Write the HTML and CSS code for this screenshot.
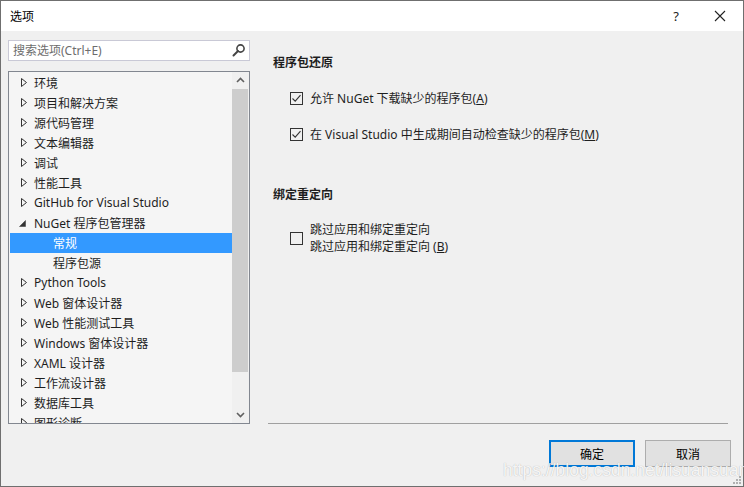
FILE: index.html
```html
<!DOCTYPE html>
<html lang="zh">
<head>
<meta charset="utf-8">
<link rel="stylesheet" href="styles.css">
</head>
<body>
<div class="window">
  <div class="titlebar">
    <span class="title">选项</span>
    <span class="tb-btn help">?</span>
    <span class="tb-btn close"><svg width="12" height="12" viewBox="0 0 12 12"><path d="M1 1L11 11M11 1L1 11" stroke="#222" stroke-width="1.1" fill="none"/></svg></span>
  </div>
  <div class="main">
    <div class="left">
      <div class="search">
        <span class="placeholder">搜索选项(Ctrl+E)</span>
        <svg class="search-icon" width="14" height="14" viewBox="0 0 14 14"><circle cx="8.5" cy="5.5" r="3.6" stroke="#444" stroke-width="1.6" fill="none"/><path d="M6 8L1.5 12.5" stroke="#444" stroke-width="2" stroke-linecap="round"/></svg>
      </div>
      <div class="tree">
        <div class="rows">
          <div class="row"><span class="arrow"><svg width="6" height="9" viewBox="0 0 6 9"><path d="M0.5 0.5L5.5 4.5L0.5 8.5Z" fill="none" stroke="#333"/></svg></span>环境</div>
          <div class="row"><span class="arrow"><svg width="6" height="9" viewBox="0 0 6 9"><path d="M0.5 0.5L5.5 4.5L0.5 8.5Z" fill="none" stroke="#333"/></svg></span>项目和解决方案</div>
          <div class="row"><span class="arrow"><svg width="6" height="9" viewBox="0 0 6 9"><path d="M0.5 0.5L5.5 4.5L0.5 8.5Z" fill="none" stroke="#333"/></svg></span>源代码管理</div>
          <div class="row"><span class="arrow"><svg width="6" height="9" viewBox="0 0 6 9"><path d="M0.5 0.5L5.5 4.5L0.5 8.5Z" fill="none" stroke="#333"/></svg></span>文本编辑器</div>
          <div class="row"><span class="arrow"><svg width="6" height="9" viewBox="0 0 6 9"><path d="M0.5 0.5L5.5 4.5L0.5 8.5Z" fill="none" stroke="#333"/></svg></span>调试</div>
          <div class="row"><span class="arrow"><svg width="6" height="9" viewBox="0 0 6 9"><path d="M0.5 0.5L5.5 4.5L0.5 8.5Z" fill="none" stroke="#333"/></svg></span>性能工具</div>
          <div class="row"><span class="arrow"><svg width="6" height="9" viewBox="0 0 6 9"><path d="M0.5 0.5L5.5 4.5L0.5 8.5Z" fill="none" stroke="#333"/></svg></span>GitHub for Visual Studio</div>
          <div class="row"><span class="arrow exp"><svg width="7" height="7" viewBox="0 0 7 7"><path d="M6.5 0.5L6.5 6.5L0.5 6.5Z" fill="#333" stroke="#333" stroke-width="0.5"/></svg></span>NuGet 程序包管理器</div>
          <div class="row child selected">常规</div>
          <div class="row child">程序包源</div>
          <div class="row"><span class="arrow"><svg width="6" height="9" viewBox="0 0 6 9"><path d="M0.5 0.5L5.5 4.5L0.5 8.5Z" fill="none" stroke="#333"/></svg></span>Python Tools</div>
          <div class="row"><span class="arrow"><svg width="6" height="9" viewBox="0 0 6 9"><path d="M0.5 0.5L5.5 4.5L0.5 8.5Z" fill="none" stroke="#333"/></svg></span>Web 窗体设计器</div>
          <div class="row"><span class="arrow"><svg width="6" height="9" viewBox="0 0 6 9"><path d="M0.5 0.5L5.5 4.5L0.5 8.5Z" fill="none" stroke="#333"/></svg></span>Web 性能测试工具</div>
          <div class="row"><span class="arrow"><svg width="6" height="9" viewBox="0 0 6 9"><path d="M0.5 0.5L5.5 4.5L0.5 8.5Z" fill="none" stroke="#333"/></svg></span>Windows 窗体设计器</div>
          <div class="row"><span class="arrow"><svg width="6" height="9" viewBox="0 0 6 9"><path d="M0.5 0.5L5.5 4.5L0.5 8.5Z" fill="none" stroke="#333"/></svg></span>XAML 设计器</div>
          <div class="row"><span class="arrow"><svg width="6" height="9" viewBox="0 0 6 9"><path d="M0.5 0.5L5.5 4.5L0.5 8.5Z" fill="none" stroke="#333"/></svg></span>工作流设计器</div>
          <div class="row"><span class="arrow"><svg width="6" height="9" viewBox="0 0 6 9"><path d="M0.5 0.5L5.5 4.5L0.5 8.5Z" fill="none" stroke="#333"/></svg></span>数据库工具</div>
          <div class="row"><span class="arrow"><svg width="6" height="9" viewBox="0 0 6 9"><path d="M0.5 0.5L5.5 4.5L0.5 8.5Z" fill="none" stroke="#333"/></svg></span>图形诊断</div>
        </div>
        <div class="scrollbar">
          <div class="sb-btn"><svg width="9" height="6" viewBox="0 0 9 6"><path d="M1 5L4.5 1.5L8 5" stroke="#606060" stroke-width="1.6" fill="none"/></svg></div>
          <div class="sb-thumb"></div>
          <div class="sb-track"></div>
          <div class="sb-btn"><svg width="9" height="6" viewBox="0 0 9 6"><path d="M1 1L4.5 4.5L8 1" stroke="#606060" stroke-width="1.6" fill="none"/></svg></div>
        </div>
      </div>
    </div>
    <div class="right">
      <div class="content">
        <div class="heading">程序包还原</div>
        <div class="check first">
          <span class="box"><svg width="11" height="11" viewBox="0 0 11 11"><path d="M1.5 5.5L4.2 8.2L9.5 2.2" stroke="#333" stroke-width="1.1" fill="none"/></svg></span>
          <span class="label">允许 NuGet 下载缺少的程序包(<u>A</u>)</span>
        </div>
        <div class="check second">
          <span class="box"><svg width="11" height="11" viewBox="0 0 11 11"><path d="M1.5 5.5L4.2 8.2L9.5 2.2" stroke="#333" stroke-width="1.1" fill="none"/></svg></span>
          <span class="label">在 Visual Studio 中生成期间自动检查缺少的程序包(<u>M</u>)</span>
        </div>
        <div class="heading h2">绑定重定向</div>
        <div class="check multi">
          <span class="box"></span>
          <span class="label">跳过应用和绑定重定向<br>跳过应用和绑定重定向 (<u>B</u>)</span>
        </div>
      </div>
    </div>
  </div>
  <div class="footer">
    <button class="btn default">确定</button>
    <button class="btn">取消</button>
  </div>
  <div class="watermark">https://blog.csdn.net/lisuansuang</div>
  <svg class="grip" width="10" height="10" viewBox="0 0 10 10"><g fill="#b0b0b0"><rect x="7" y="1" width="2" height="2"/><rect x="4" y="4" width="2" height="2"/><rect x="7" y="4" width="2" height="2"/><rect x="1" y="7" width="2" height="2"/><rect x="4" y="7" width="2" height="2"/><rect x="7" y="7" width="2" height="2"/></g></svg>
</div>
</body>
</html>
```
FILE: styles.css
```css
* { box-sizing: border-box; }
html, body { margin: 0; padding: 0; }
body {
  font-family: "Noto Sans", "Noto Sans CJK SC", sans-serif;
  font-size: 12px;
  color: #1e1e1e;
  background: #f0f0f0;
}
.window {
  position: relative;
  width: 744px;
  height: 487px;
  border: 1px solid #6f6f6f;
  background: #f0f0f0;
  display: flex;
  flex-direction: column;
}
.titlebar {
  height: 30px;
  background: #fff;
  display: flex;
  align-items: center;
  padding-left: 9px;
}
.title { flex: 1; font-size: 12px; color: #000; }
.tb-btn {
  width: 44px;
  display: flex;
  justify-content: center;
  align-items: center;
  color: #222;
}
.help { font-size: 13px; }
.close { margin-right: 1px; }
.main {
  display: flex;
  padding: 9px 0 0 7px;
  height: 393px;
}
.left {
  width: 242px;
  display: flex;
  flex-direction: column;
  gap: 10px;
}
.search {
  height: 21px;
  border: 1px solid #c9c9d6;
  background: #fff;
  display: flex;
  align-items: center;
  padding: 0 3px 0 4px;
}
.placeholder { flex: 1; color: #6d6d6d; }
.search-icon { display: block; }
.tree {
  height: 354px;
  border: 1px solid #828790;
  background: #f5f5f5;
  display: flex;
  overflow: hidden;
}
.rows { flex: 1; overflow: hidden; padding-left: 1px; padding-top: 1px; }
.row {
  height: 20px;
  display: flex;
  align-items: center;
  white-space: nowrap;
}
.row .arrow {
  flex: none;
  width: 24px;
  padding-left: 11px;
  display: flex;
  align-items: center;
}
.row .arrow.exp { padding-left: 9px; padding-top: 1px; }
.row .arrow svg { display: block; flex: none; }
.row.child { padding-left: 43px; }
.row.selected { background: #3399ff; color: #fff; }
.scrollbar {
  width: 17px;
  background: #f0f0f0;
  display: flex;
  flex-direction: column;
}
.sb-btn {
  height: 17px;
  display: flex;
  justify-content: center;
  align-items: center;
}
.sb-thumb { height: 283px; background: #cdcdcd; margin: 0 1px 0 0; }
.sb-track { flex: 1; }
.right {
  flex: 1;
  margin-left: 18px;
  margin-right: 15px;
  border-bottom: 1px solid #a0a0a0;
}
.content { padding: 14px 0 0 5px; }
.heading { font-weight: bold; height: 18px; line-height: 18px; }
.check {
  display: flex;
  align-items: center;
  margin-left: 17px;
}
.check.first { margin-top: 17px; height: 18px; }
.check.second { margin-top: 18px; height: 18px; }
.check.multi { margin-top: 17px; }
.heading.h2 { margin-top: 43px; }
.box {
  width: 13px;
  height: 13px;
  border: 1px solid #333;
  background: transparent;
  display: flex;
  justify-content: center;
  align-items: center;
  margin-right: 7px;
  flex: none;
}
.box svg { display: block; }
.label { line-height: 17px; }
.label u { text-underline-offset: 1px; }
.footer {
  flex: 1;
  display: flex;
  justify-content: flex-end;
  align-items: flex-start;
  gap: 10px;
  padding: 16px 12px 0 0;
}
.btn {
  width: 86px;
  height: 27px;
  font-family: "Noto Sans", "Noto Sans CJK SC", sans-serif;
  font-size: 12px;
  color: #000;
  background: #e1e1e1;
  border: 1px solid #adadad;
  padding: 0;
}
.btn.default { border: 2px solid #0078d7; }
.watermark {
  position: absolute;
  left: 502px;
  top: 459px;
  font-family: "Liberation Sans", Arial, sans-serif;
  font-size: 17.5px;
  color: rgba(255,255,255,0.9);
  text-shadow: 0 0 1px rgba(0,0,0,0.3);
  white-space: nowrap;
}
.grip { position: absolute; right: 1px; bottom: 1px; }
```
